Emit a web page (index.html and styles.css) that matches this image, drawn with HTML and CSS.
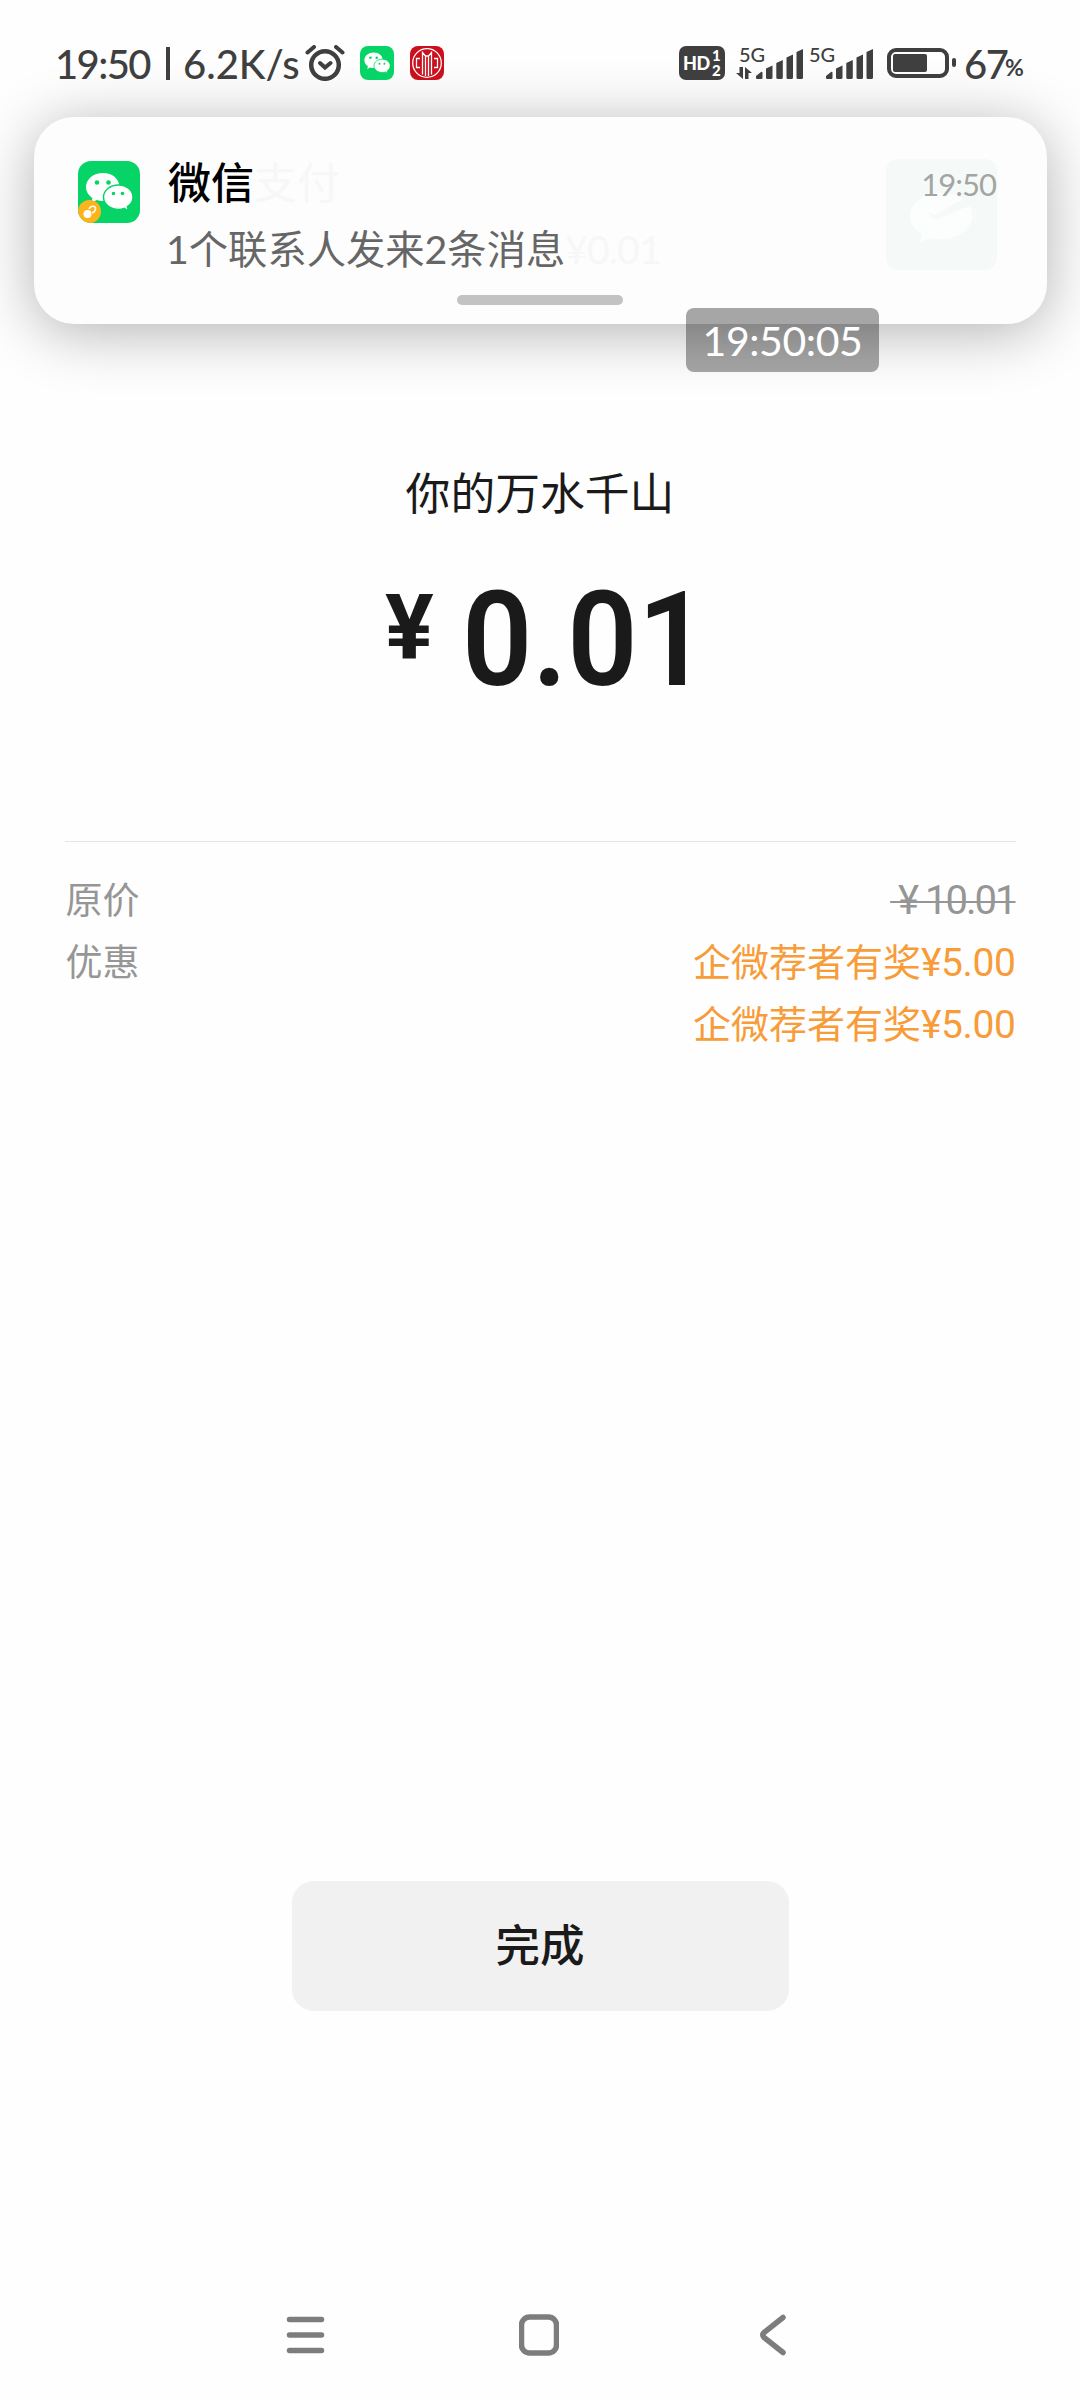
FILE: index.html
```html
<!DOCTYPE html>
<html lang="zh-CN">
<head>
<meta charset="utf-8">
<title>微信支付</title>
<link rel="stylesheet" href="styles.css">
</head>
<body>
<svg class="defs" aria-hidden="true">
  <symbol id="bubbles" viewBox="0 0 62 62">
    <path fill="#fff" d="M25 12C15.500 12 8 18.200 8 26c0 4.500 2.500 8.400 6.500 11l-1.400 5 5.600-3c2 .6 4.100 1 6.300 1 9.500 0 16.500-6.200 16.500-14S34.500 12 25 12z"/>
    <circle cx="19" cy="21.500" r="2.300" fill="#07d466"/><circle cx="30.500" cy="21.500" r="2.300" fill="#07d466"/>
    <path fill="#fff" stroke="#07d466" stroke-width="1.500" d="M40.500 24C32.300 24 25.500 29.300 25.500 36.200s6.800 12.200 15 12.200c2 0 3.900-.4 5.600-1l4.500 2.500-1.200-4.200c3.400-2.200 5.600-5.600 5.600-9.500C55 29.300 48.700 24 40.500 24z"/>
    <circle cx="35.500" cy="32.500" r="1.800" fill="#07d466"/><circle cx="44.500" cy="32.500" r="1.800" fill="#07d466"/>
  </symbol>
  <symbol id="signal" viewBox="0 0 47 30">
    <path d="M0 29v-2l5-4q1-.6 1.500.5v5q0 1.500-1 1.500H1q-1 0-1-1zM10 19.500l6.500-3v12q0 1.500-1.500 1.500h-3.500Q10 30 10 28.500zM20.300 14l6.500-3v17.500q0 1.500-1.500 1.500h-3.500q-1.500 0-1.500-1.500zM30.500 8.500l6.500-3v23q0 1.500-1.500 1.500H32q-1.500 0-1.500-1.500zM40.500 3l6.500-3v28.500q0 1.500-1.500 1.500H42q-1.500 0-1.500-1.500z"/>
  </symbol>
</svg>

<header class="status">
  <span class="clock">19:50</span>
  <span class="sep"></span>
  <span class="speed">6.2K/s</span>
  <svg class="alarm" viewBox="0 0 40 36" fill="none" stroke="#3f3f3f" stroke-linecap="round" stroke-width="4"><circle cx="20" cy="20" r="13.800" stroke-width="4.500"/><path d="M2.500 7.500l6.500-5.500M37.500 7.500l-6.500-5.500M15 18l5 4.500 5.500-4.500"/></svg>
  <svg class="mini wechat" viewBox="0 0 62 62"><use href="#bubbles"/></svg>
  <svg class="mini citic" viewBox="0 0 34 34" fill="none" stroke="#fff" stroke-width="1.300"><circle cx="17" cy="17" r="14.300"/><path d="M12.500 5.500v23M15.500 10v20M18.500 10v20M21.500 5.500v23M12 6l3.500 4h3l3.500-4M10 12.500H6.500v9H10M24 12.500h3.500v9H24"/></svg>
  <div class="right">
    <span class="hd">HD<span class="hd-num"><i>1</i><i>2</i></span></span>
    <span class="net"><b>5G</b><svg class="arrows" viewBox="0 0 16 12"><path d="M3.500 0H7v12L0 6h3.500zM9 12V0l7 6h-3.500v6z"/></svg><svg class="bars"><use href="#signal"/></svg></span>
    <span class="net second"><b>5G</b><svg class="bars"><use href="#signal"/></svg></span>
    <span class="battery"><span></span></span><span class="nub"></span>
    <span class="level">67</span><span class="pct">%</span>
  </div>
</header>

<section class="notice">
  <svg class="app" viewBox="0 0 62 62"><use href="#bubbles"/><circle cx="11.500" cy="50.500" r="11.500" fill="#fdb41c"/><circle cx="9.500" cy="53" r="4" fill="#fff"/><path d="M11 48c2-4 7-3.500 6.500 0-.3 2-2 3.500-3.500 4" fill="none" stroke="#fff" stroke-width="1.600"/></svg>
  <div class="body">
    <div class="title">微信<span class="ghost">支付</span></div>
    <div class="message">1个联系人发来2条消息<span class="ghost">¥0.01</span></div>
  </div>
  <div class="thumb">
    <time>19:50</time>
    <svg viewBox="0 0 62 52"><path fill="#fcfefd" d="M31 0C14 0 0 10 0 23c0 8 5 14 12 18l-2 9 10-5c4 1 7 1 11 1 17 0 31-10 31-23 0-4-1-7-3-10L28 26c-2 1-3 1-4 0l-8-8 9 4L53 6C47 2 39 0 31 0z"/></svg>
  </div>
  <span class="handle"></span>
  <span class="stamp">19:50:05</span>
</section>

<main class="receipt">
  <h1>你的万水千山</h1>
  <p class="total"><span class="yen">¥</span><span class="sum">0.01</span></p>
  <dl class="details">
    <dt>原价</dt><dd class="was">&nbsp;¥ 10.01</dd>
    <dt>优惠</dt><dd class="off">企微荐者有奖<span>¥5.00</span></dd>
    <dd class="off">企微荐者有奖<span>¥5.00</span></dd>
  </dl>
  <button class="done">完成</button>
</main>

<nav class="keys">
  <svg viewBox="0 0 40 42"><path d="M3.500 5.500h32M3.500 21h32M3.500 36.500h32"/></svg>
  <svg viewBox="0 0 40 42"><rect x="2.500" y="3" width="35" height="36" rx="8"/></svg>
  <svg viewBox="0 0 40 42"><path d="M23 3.500L4 18.500q-2.500 2.500 0 5L23 38.500"/></svg>
</nav>
</body>
</html>
```
FILE: styles.css
```css
* { box-sizing: border-box; margin: 0; padding: 0; }
body {
  width: 1080px;
  height: 2400px;
  display: flex;
  flex-direction: column;
  overflow: hidden;
  background: #fefefe;
  font-family: Lato, "Noto Sans CJK SC", sans-serif;
  color: #1a1a1a;
}
.defs { display: none; }

/* status bar */
.status {
  height: 117px;
  padding: 46px 55px 0;
  display: flex;
  align-items: flex-start;
  color: #3f3f3f;
  font-weight: 500;
  font-size: 40px;
  line-height: 36px;
  position: relative;
  z-index: 2;
}
.clock { width: 111px; letter-spacing: -1.600px; white-space: nowrap; }
.sep { width: 4px; height: 33px; margin-top: 1px; background: #3f3f3f; }
.speed { width: 135px; padding-left: 13px; white-space: nowrap; }
.alarm { width: 40px; height: 36px; margin-top: -1px; }
.mini { width: 34px; height: 34px; border-radius: 8px; margin-left: 15px; }
.mini + .mini { margin-left: 16px; }
.wechat, .app { background: #07d466; }
.citic { background: #c9101c; }
.right { margin-left: 235px; display: flex; align-items: flex-start; }
.hd {
  width: 46px; height: 34px; border-radius: 7px;
  background: #3f3f3f; color: #fff;
  font: 900 18px/35px Lato, sans-serif;
  letter-spacing: -.3px;
  padding-left: 4px; display: flex;
}
.hd-num { display: flex; flex-direction: column; margin-left: 2px; padding-top: 2px; }
.hd-num i { font: 900 15px/15px Lato, sans-serif; }
.net { width: 67px; height: 34px; margin-left: 11px; position: relative; }
.net b { position: absolute; left: 3px; top: -1px; font: 500 20px/18px Lato, sans-serif; }
.arrows { position: absolute; left: 0; top: 21px; width: 16px; height: 12px; fill: #3f3f3f; }
.bars { position: absolute; left: 20px; top: 3px; width: 47px; height: 30px; fill: #3f3f3f; }
.second { margin-left: 3px; }
.battery { width: 62px; height: 30px; margin: 2px 0 0 14px; border: 4px solid #3f3f3f; border-radius: 9px; padding: 2px; }
.battery span { display: block; width: 34px; height: 18px; background: #3f3f3f; border-radius: 2px; }
.nub { width: 4px; height: 9px; margin: 12px 0 0 3px; background: #3f3f3f; border-radius: 2px; }
.level { width: 49px; padding-left: 8px; letter-spacing: -1.500px; }
.pct { font-size: 23px; font-weight: 700; line-height: 42px; }

/* notification card */
.notice {
  position: relative;
  width: 1013px;
  height: 207px;
  margin-left: 34px;
  padding: 42px 50px 0 44px;
  display: flex;
  border-radius: 40px;
  background: #fdfdfd;
  box-shadow: 0 8px 60px rgba(0, 0, 0, .3);
}
.app { width: 62px; height: 62px; margin-top: 2px; border-radius: 13px; flex: none; }
.body { flex: 1; padding-left: 28px; white-space: nowrap; }
.title { font-size: 43px; line-height: 48px; font-weight: 500; color: #000; }
.message { font-size: 39.300px; line-height: 40px; margin: 22px 0 0 -2px; color: #666; font-weight: 400; }
.ghost { color: #f7f7f7; font-weight: 400; }
.message .ghost { letter-spacing: -1px; }
.thumb { width: 111px; height: 111px; border-radius: 12px; background: #f5faf8; text-align: right; }
.thumb time { display: block; position: relative; z-index: 1; font-size: 31px; letter-spacing: -1px; padding-right: 1px; line-height: 50px; color: #a3a5a4; white-space: nowrap; }
.thumb svg { display: block; width: 62px; height: 52px; margin: -16px 0 0 24px; }
.handle { position: absolute; left: 423px; top: 178px; width: 166px; height: 10px; border-radius: 5px; background: #c3c3c3; }
.stamp {
  position: absolute; left: 652px; top: 191px; width: 193px; height: 64px;
  border-radius: 8px; background: rgba(0, 0, 0, .345); color: #fff;
  font-size: 41px; letter-spacing: -.4px; line-height: 66px; text-align: center;
}

/* receipt */
.receipt { display: flex; flex-direction: column; align-items: center; }
h1 { margin-top: 139px; font-size: 44.800px; line-height: 60px; font-weight: 400; }
.total {
  width: 310px; height: 110px; margin-top: 51px;
  display: flex; font-family: Roboto, sans-serif;
}
.yen { width: 76px; flex: none; font-size: 91px; font-weight: 700; line-height: 108px; }
.sum { margin-left: 1px; font-size: 131px; font-weight: 600; line-height: 132px; transform: scaleX(.94); transform-origin: left; }
.details {
  width: 951px;
  margin-top: 157px;
  padding-top: 27px;
  border-top: 1px solid #e5e5e5;
  display: grid;
  grid-template-columns: 1fr auto;
  grid-auto-rows: 62px;
  font-size: 37px;
  line-height: 62px;
}
dt { color: #969696; padding-left: 1px; }
dd { grid-column: 2; text-align: right; }
.was { color: #969696; font: 400 40px/64px Roboto, sans-serif; letter-spacing: -2px; text-decoration: line-through 2px; }
.off { color: #f79c38; font-size: 38px; line-height: 60px; }
.off span { font-family: Roboto, sans-serif; font-size: 39px; line-height: 1; letter-spacing: -.4px; }
.done {
  width: 497px; height: 130px; margin-top: 826px; padding-bottom: 6px;
  border: 0; border-radius: 22px; background: #f1f1f1; color: #1a1a1a;
  font: 500 44.500px/120px "Noto Sans CJK SC", sans-serif;
}

/* navigation keys */
.keys { margin-top: auto; height: 86px; padding-left: 286px; display: flex; }
.keys svg { width: 40px; height: 42px; fill: none; stroke: #7d7d7d; stroke-width: 5.500; stroke-linecap: round; }
.keys svg:nth-child(2) { margin: 0 201px 0 193px; }
```
